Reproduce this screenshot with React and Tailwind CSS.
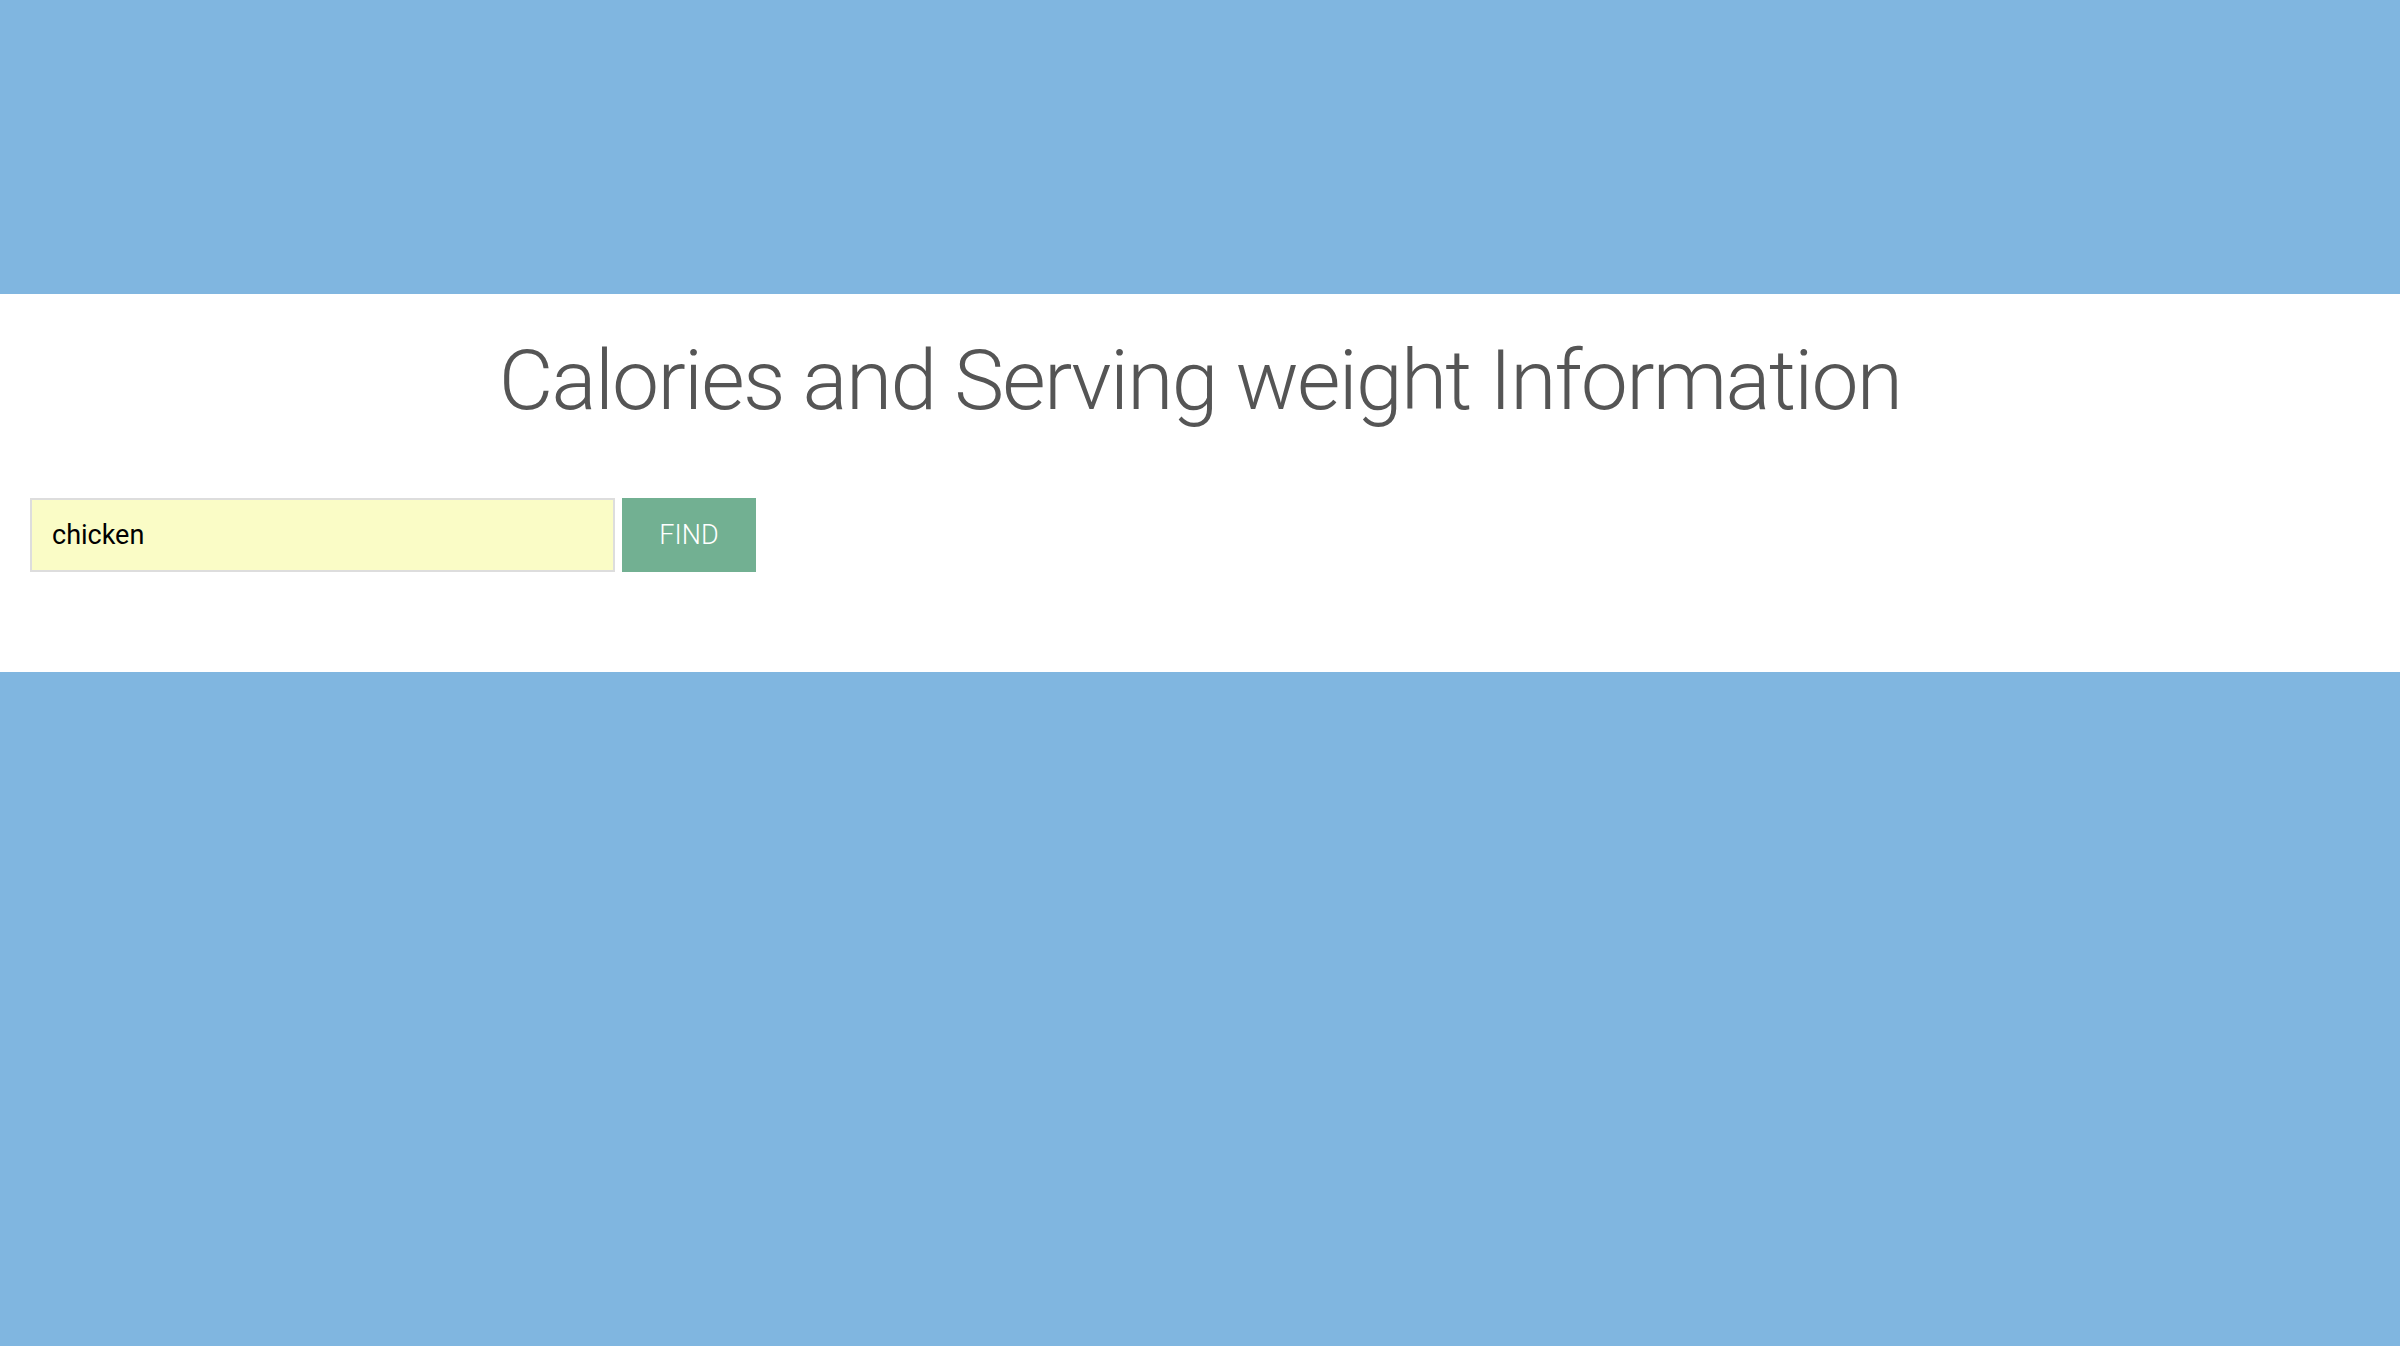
import React, { useState } from "react";

const App = () => {
    const [query, setQuery] = useState("chicken");

    return (
        <div className="min-h-screen bg-[#80b6e0] font-light" style={{ fontFamily: "Roboto, 'Liberation Sans', sans-serif" }}>
            <div className="h-[294px]" />
            <section className="h-[378px] bg-white pt-[37px]">
                <h1 className="text-center text-[84px] leading-[100px] tracking-[-1.7px] text-[#555555]">
                    Calories and Serving weight Information
                </h1>
                <form
                    className="flex gap-[7px] pl-[30px] mt-[67px]"
                    onSubmit={(e) => e.preventDefault()}
                >
                    <input
                        type="text"
                        value={query}
                        autoFocus
                        onChange={(e) => setQuery(e.target.value)}
                        className="w-[585px] h-[74px] border-2 border-[#dddddd] bg-[#fafcc6] pl-[20px] text-[27px] font-normal text-black outline-none caret-black"
                    />
                    <button
                        type="submit"
                        className="w-[134px] h-[74px] bg-[#72b092] text-white text-[27px]"
                    >
                        FIND
                    </button>
                </form>
            </section>
        </div>
    );
};

export default App;
